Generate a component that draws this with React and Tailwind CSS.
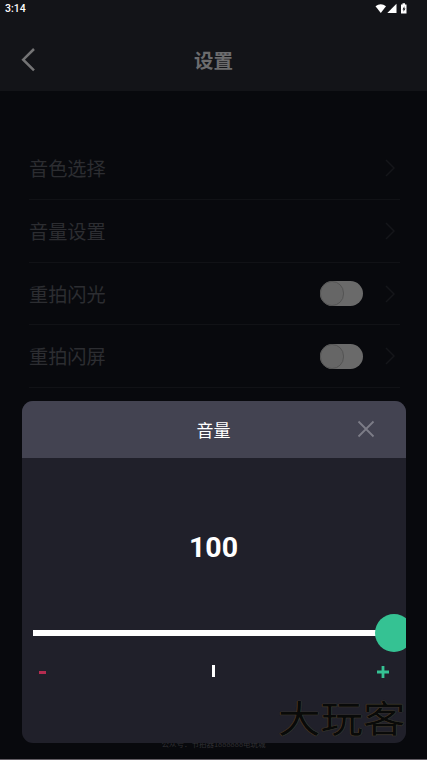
const rows = [
  { label: "音色选择" },
  { label: "音量设置" },
  { label: "重拍闪光", toggle: true },
  { label: "重拍闪屏", toggle: true },
];

function StatusBar() {
  return (
    <div className="flex h-[18px] items-center justify-between pl-[5px] pr-[19px] text-white">
      <span className="pt-px font-[Roboto] text-[10.5px] leading-none font-medium">3:14</span>
      <svg width="33" height="12" viewBox="0 0 33 12" fill="currentColor">
        <path d="M.5 3.200C3.700.5 7.800.5 11 3.200L5.800 10Z" />
        <path d="M12.300 10H21.500V.8Z" />
        <path
          fillRule="evenodd"
          d="M26 1.500h1.500V.3h2.500v1.200h1.500v9H26ZM29.400 3.200 27.500 6.400h1v2.400l2-3.200h-1.100Z"
        />
      </svg>
    </div>
  );
}

function Header() {
  return (
    <header className="h-[91px] bg-[#131418]">
      <StatusBar />
      <div className="grid h-[84px] grid-cols-[1fr_auto_1fr] items-center px-[21px]">
        <button aria-label="返回" className="w-4">
          <svg width="16" height="24" viewBox="0 0 16 24" fill="none" stroke="#747475" strokeWidth="2.5">
            <path d="M13 1 2.200 11.700 13 22.300" />
          </svg>
        </button>
        <h1 className="text-[19.500px] font-bold text-[#6c6c6e]">设置</h1>
      </div>
    </header>
  );
}

function Toggle() {
  return (
    <span className="flex h-[25px] w-[43px] rounded-full bg-[#6a6a6a]">
      <span className="h-[25px] w-[24px] rounded-full border border-[#545454] bg-[#666666]" />
    </span>
  );
}

function SettingRow({ label, toggle }) {
  return (
    <li className="flex h-[62.700px] items-center border-b border-[#111216] pr-[5px]">
      <span className="flex-1 pt-px text-[19.200px] text-[#2c2d31]">{label}</span>
      {toggle && <Toggle />}
      <svg className="ml-[22px]" width="10" height="18" viewBox="0 0 10 18" fill="none" stroke="#15161a" strokeWidth="1.500">
        <path d="m1 1 8 8-8 8" />
      </svg>
    </li>
  );
}

function VolumeDialog() {
  return (
    <section className="absolute top-[401px] left-[21.500px] flex h-[342px] w-[384px] flex-col overflow-hidden rounded-[11px] bg-[#20202a]">
      <div className="grid h-[57px] grid-cols-[1fr_auto_1fr] items-center bg-[#434351]">
        <h2 className="col-start-2 text-[17px] text-white">音量</h2>
        <button aria-label="关闭" className="mr-[31px] mb-px justify-self-end">
          <svg width="18" height="18" viewBox="0 0 18 18" fill="none" stroke="#7c7c87" strokeWidth="1.800">
            <path d="m1.500 1.500 15 15m0-15-15 15" />
          </svg>
        </button>
      </div>
      <div className="pt-[70px] text-center font-[Roboto] text-[28.500px] leading-[40px] font-bold text-white">
        100
      </div>
      <div className="mt-[46px] flex h-[38px] shrink-0 items-center pl-[11px]">
        <div className="h-[6px] w-[350px] shrink-0 bg-white" />
        <div className="-ml-[8px] size-[38px] shrink-0 rounded-full bg-[#35c293]" />
      </div>
      <div className="mt-[9px] flex h-[20px] items-center justify-between pr-[17px] pl-[17px]">
        <span className="mt-[3px] h-[3px] w-[7px] bg-[#b52c50]" />
        <span className="mb-px ml-[4px] h-[12px] w-[3px] bg-white" />
        <svg className="mt-px" width="12" height="12" viewBox="0 0 12 12" stroke="#35c293" strokeWidth="2.800">
          <path d="M0 6h12M6 0v12" />
        </svg>
      </div>
    </section>
  );
}

export default function App() {
  return (
    <div className="relative flex h-[760px] w-[427px] flex-col overflow-hidden bg-[#08090d] font-['Noto_Sans_CJK_SC',sans-serif]">
      <Header />
      <ul className="mt-[46.300px] flex flex-col pr-[27px] pl-[29px]">
        {rows.map((row) => (
          <SettingRow key={row.label} {...row} />
        ))}
      </ul>
      <p className="mt-auto pb-[11px] text-center text-[7.500px] leading-[9px] text-[#303034]">
        公众号：节拍器1888888电玩城
      </p>
      <div className="h-px shrink-0 bg-[#625d64]" />
      <VolumeDialog />
      <div className="absolute top-[696px] left-[278px] origin-left scale-y-[.87] text-[42.500px] leading-[42px] whitespace-nowrap text-[#090a09] [text-shadow:0_0_1px_#5a5034,0_0_1px_#5a5034]">
        大玩客
      </div>
    </div>
  );
}
